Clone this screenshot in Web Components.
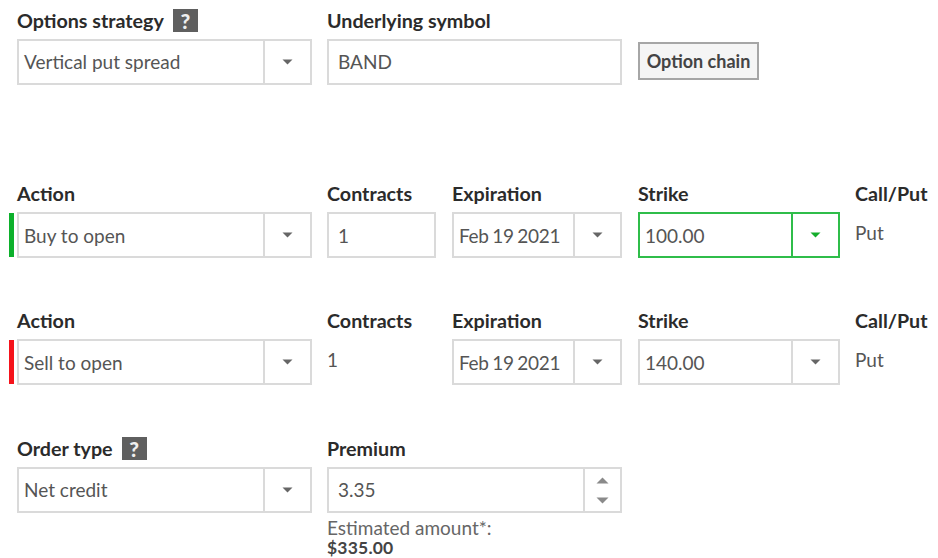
<!DOCTYPE html>
<html>
<head>
<meta charset="utf-8">
<title>Order</title>
<style>
    html, body { margin: 0; padding: 0; background: #fff; }
    body { font-family: Lato, "Open Sans", sans-serif; color: #555; width: 938px; height: 558px; overflow: hidden; }
    #first { margin-top: 12px; }
    #second { margin-top: 100px; --value-shift: 1px; }
    #third { margin-top: 54px; --value-shift: 1px; }
    #fourth { margin-top: 55px; }
    .date { word-spacing: -1px; letter-spacing: -0.3px; }
</style>
</head>
<body>
<order-form>
    <form-row id="first">
        <form-cell label="Options strategy" help width="295"><select-box value="Vertical put spread"></select-box></form-cell>
        <form-cell label="Underlying symbol" span="2" width="295"><text-box value="BAND"></text-box></form-cell>
        <form-cell span="2" align="button"><chain-button>Option chain</chain-button></form-cell>
    </form-row>
    <form-row id="second">
        <form-cell label="Action" width="295"><select-box value="Buy to open" marker="#0cb02b"></select-box></form-cell>
        <form-cell label="Contracts" width="109"><text-box value="1"></text-box></form-cell>
        <form-cell label="Expiration" width="170"><select-box class="date" value="Feb 19 2021"></select-box></form-cell>
        <form-cell label="Strike" width="202"><select-box value="100.00" focused></select-box></form-cell>
        <form-cell label="Call/Put"><plain-value>Put</plain-value></form-cell>
    </form-row>
    <form-row id="third">
        <form-cell label="Action" width="295"><select-box value="Sell to open" marker="#f5131b"></select-box></form-cell>
        <form-cell label="Contracts" width="109"><plain-value>1</plain-value></form-cell>
        <form-cell label="Expiration" width="170"><select-box class="date" value="Feb 19 2021"></select-box></form-cell>
        <form-cell label="Strike" width="202"><select-box value="140.00"></select-box></form-cell>
        <form-cell label="Call/Put"><plain-value>Put</plain-value></form-cell>
    </form-row>
    <form-row id="fourth">
        <form-cell label="Order type" help width="295"><select-box value="Net credit"></select-box></form-cell>
        <form-cell label="Premium" span="2" width="295">
            <spin-box value="3.35"></spin-box>
            <estimate-note amount="$335.00">Estimated amount*:</estimate-note>
        </form-cell>
    </form-row>
</order-form>

<script>
"use strict";

class OrderForm extends HTMLElement {
    constructor() {
        super();
        this.attachShadow({ mode: "open" });
        this.shadowRoot.innerHTML = `
            <style>
                :host { display: block; padding-left: 17px; }
            </style>
            <slot></slot>
        `;
    }
}

class FormRow extends HTMLElement {
    constructor() {
        super();
        this.attachShadow({ mode: "open" });
        this.shadowRoot.innerHTML = `
            <style>
                :host {
                    display: grid;
                    grid-template-columns: 310px 125px 186px 217px 1fr;
                }
            </style>
            <slot></slot>
        `;
    }
}

class FormCell extends HTMLElement {
    constructor() {
        super();
        this.attachShadow({ mode: "open" });
        this.shadowRoot.innerHTML = `
            <style>
                :host { display: block; min-width: 0; }
                header {
                    display: flex;
                    align-items: center;
                    gap: 9px;
                    height: 17px;
                    margin-bottom: 10px;
                    font-size: 19.7px;
                    font-weight: 700;
                    color: #2b2b2b;
                    white-space: nowrap;
                }
                #help {
                    width: 25px;
                    height: 23px;
                    background: #5f5f5f;
                    color: #eee;
                    font-size: 21px;
                    font-weight: 900;
                    line-height: 23px;
                    text-align: center;
                }
                :host([align="button"]) header { height: 30px; margin: 0; }
            </style>
            <header><span id="label"></span><span id="help">?</span></header>
            <div id="main"><slot></slot></div>
        `;
    }
    connectedCallback() {
        this.shadowRoot.querySelector("#label").textContent = this.getAttribute("label") || "";
        if (!this.hasAttribute("help")) this.shadowRoot.querySelector("#help").remove();
        if (this.hasAttribute("span")) this.style.gridColumn = "span " + this.getAttribute("span");
        if (this.hasAttribute("width")) this.shadowRoot.querySelector("#main").style.width = this.getAttribute("width") + "px";
    }
}

class SelectBox extends HTMLElement {
    constructor() {
        super();
        this.attachShadow({ mode: "open" });
        this.shadowRoot.innerHTML = `
            <style>
                :host {
                    --line: #dadada;
                    --caret: #666;
                    display: flex;
                    position: relative;
                    box-sizing: border-box;
                    height: 46px;
                    border: 2px solid var(--line);
                    background: #fff;
                    font-size: 19px;
                    color: #555;
                }
                :host([focused]) { --line: #2fbd4a; --caret: #14ad2c; }
                #text {
                    flex: 1;
                    padding: var(--value-shift, 0) 0 0 5px;
                    line-height: 42px;
                    white-space: nowrap;
                }
                #arrow {
                    width: 45px;
                    border-left: 2px solid var(--line);
                    display: flex;
                    align-items: center;
                    justify-content: center;
                }
                svg { display: block; }
                #marker {
                    position: absolute;
                    left: -10px;
                    top: -1px;
                    bottom: -1px;
                    width: 5px;
                }
            </style>
            <span id="marker"></span>
            <span id="text"></span>
            <span id="arrow"><svg width="11" height="6" viewBox="0 0 11 6"><path d="M0.5 0.5h10L5.5 5.5z" fill="var(--caret)"/></svg></span>
        `;
    }
    connectedCallback() {
        this.shadowRoot.querySelector("#text").textContent = this.getAttribute("value");
        const marker = this.shadowRoot.querySelector("#marker");
        if (this.hasAttribute("marker")) marker.style.background = this.getAttribute("marker");
        else marker.remove();
    }
}

class TextBox extends HTMLElement {
    constructor() {
        super();
        this.attachShadow({ mode: "open" });
        this.shadowRoot.innerHTML = `
            <style>
                :host {
                    display: block;
                    box-sizing: border-box;
                    height: 46px;
                    border: 2px solid #dadada;
                    padding: var(--value-shift, 0) 0 0 9px;
                    line-height: 42px;
                    font-size: 19px;
                    color: #555;
                }
            </style>
            <span id="text"></span>
        `;
    }
    connectedCallback() {
        this.shadowRoot.querySelector("#text").textContent = this.getAttribute("value");
    }
}

class SpinBox extends HTMLElement {
    constructor() {
        super();
        this.attachShadow({ mode: "open" });
        this.shadowRoot.innerHTML = `
            <style>
                :host {
                    display: flex;
                    box-sizing: border-box;
                    height: 46px;
                    border: 2px solid #dadada;
                    font-size: 19px;
                    color: #555;
                }
                #text { flex: 1; padding-left: 9px; line-height: 42px; }
                #spin {
                    width: 35px;
                    border-left: 2px solid #dadada;
                    display: flex;
                    flex-direction: column;
                    align-items: center;
                    justify-content: center;
                    gap: 13px;
                }
                svg { display: block; }
            </style>
            <span id="text"></span>
            <span id="spin">
                <svg width="13" height="7" viewBox="0 0 13 7"><path d="M0.5 6.5h12L6.5 0.5z" fill="#8a8a8a"/></svg>
                <svg width="13" height="7" viewBox="0 0 13 7"><path d="M0.5 0.5h12L6.5 6.5z" fill="#8a8a8a"/></svg>
            </span>
        `;
    }
    connectedCallback() {
        this.shadowRoot.querySelector("#text").textContent = this.getAttribute("value");
    }
}

class ChainButton extends HTMLElement {
    constructor() {
        super();
        this.attachShadow({ mode: "open" });
        this.shadowRoot.innerHTML = `
            <style>
                :host {
                    display: inline-block;
                    box-sizing: border-box;
                    width: 121px;
                    height: 38px;
                    border: 2px solid #a6a6a6;
                    background: #f5f5f5;
                    text-align: center;
                    line-height: 34px;
                    font-size: 18px;
                    font-weight: 700;
                    color: #444;
                    white-space: nowrap;
                }
            </style>
            <slot></slot>
        `;
    }
}

class PlainValue extends HTMLElement {
    constructor() {
        super();
        this.attachShadow({ mode: "open" });
        this.shadowRoot.innerHTML = `
            <style>
                :host {
                    display: block;
                    padding-top: var(--value-shift, 0);
                    font-size: 19px;
                    line-height: 40px;
                    color: #555;
                }
            </style>
            <slot></slot>
        `;
    }
}

class EstimateNote extends HTMLElement {
    constructor() {
        super();
        this.attachShadow({ mode: "open" });
        this.shadowRoot.innerHTML = `
            <style>
                :host { display: block; font-size: 19px; line-height: 21px; margin-top: 4px; color: #666; white-space: nowrap; }
                strong { display: block; margin-top: 1px; font-size: 17.5px; letter-spacing: 0.2px; line-height: 17px; color: #444; }
            </style>
            <slot></slot>
            <strong id="amount"></strong>
        `;
    }
    connectedCallback() {
        this.shadowRoot.querySelector("#amount").textContent = this.getAttribute("amount");
    }
}

customElements.define("order-form", OrderForm);
customElements.define("form-row", FormRow);
customElements.define("form-cell", FormCell);
customElements.define("select-box", SelectBox);
customElements.define("text-box", TextBox);
customElements.define("spin-box", SpinBox);
customElements.define("chain-button", ChainButton);
customElements.define("plain-value", PlainValue);
customElements.define("estimate-note", EstimateNote);
</script>
</body>
</html>
